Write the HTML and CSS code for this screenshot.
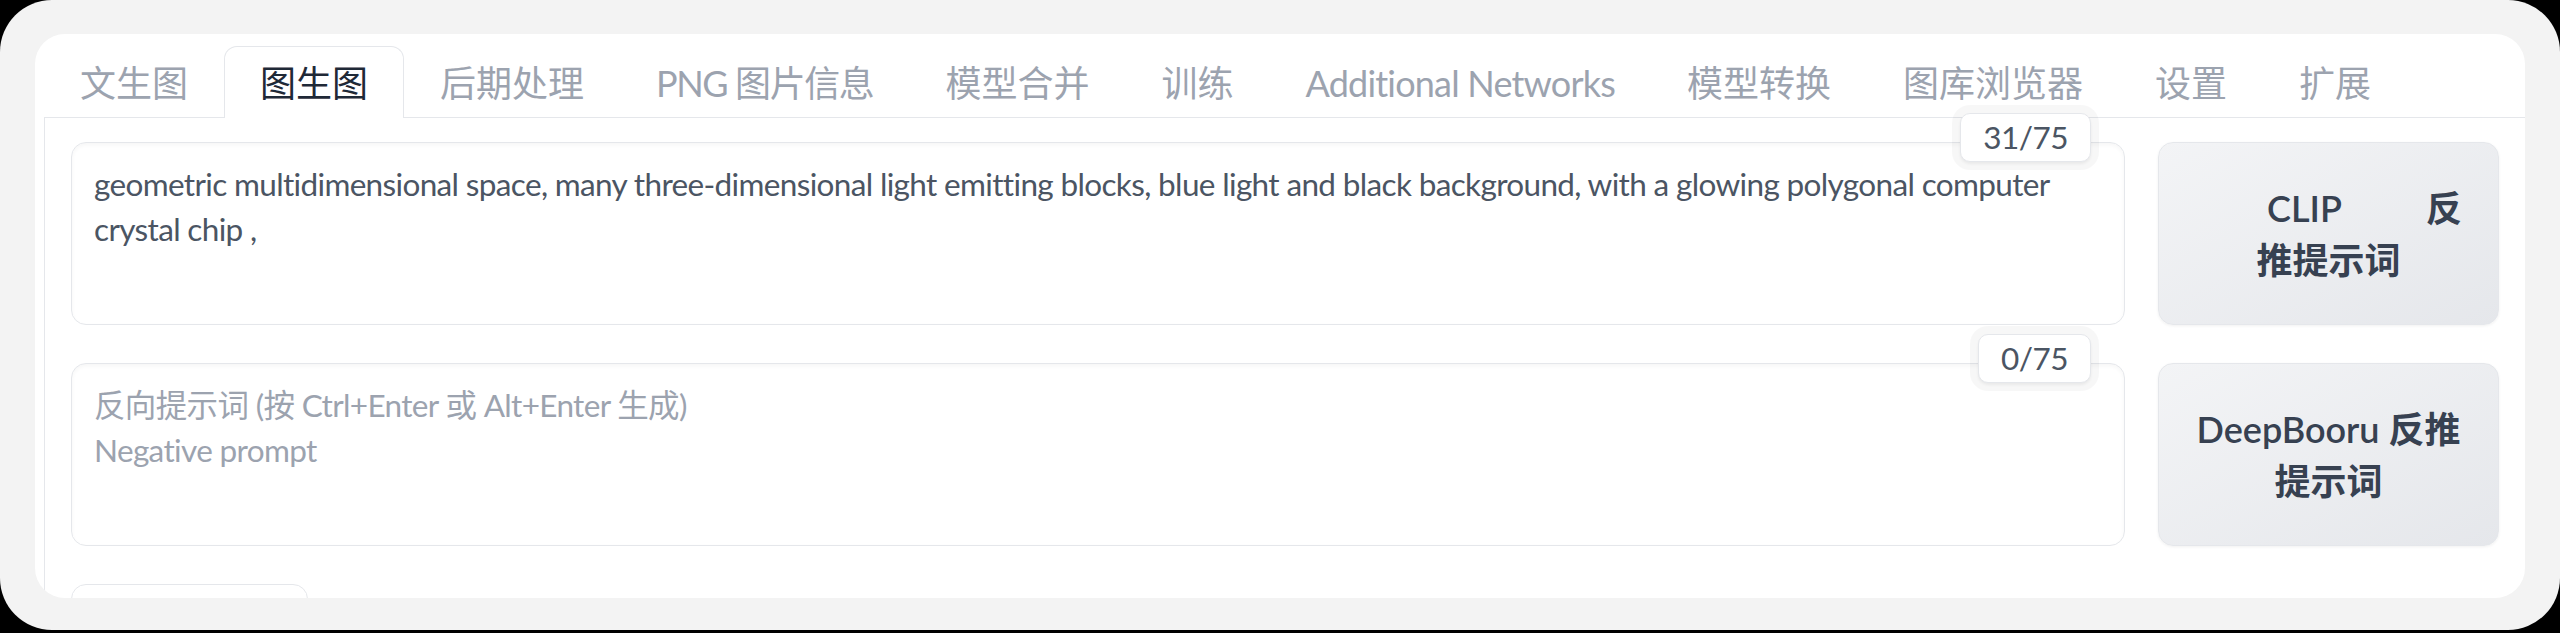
FILE: index.html
```html
<!DOCTYPE html>
<html lang="zh">
<head>
<meta charset="utf-8">
<title>img2img</title>
<link rel="stylesheet" href="styles.css">
</head>
<body>
<div class="frame">
  <div class="card">
    <div class="tabs">
      <div class="tab">文生图</div>
      <div class="tab active">图生图</div>
      <div class="tab">后期处理</div>
      <div class="tab png">PNG 图片信息</div>
      <div class="tab">模型合并</div>
      <div class="tab">训练</div>
      <div class="tab latin">Additional Networks</div>
      <div class="tab">模型转换</div>
      <div class="tab">图库浏览器</div>
      <div class="tab">设置</div>
      <div class="tab">扩展</div>
    </div>
    <div class="panel">
      <div class="grid">
        <div class="field">
          <div class="textbox">geometric multidimensional space, many three-dimensional light emitting blocks, blue light and black background, with a glowing polygonal computer crystal chip ,</div>
          <div class="counter">31/75</div>
        </div>
        <div class="btn"><span class="l1">CLIP<span class="gap"> </span>反</span><br>推提示词</div>
        <div class="field">
          <div class="textbox placeholder">反向提示词 (按 Ctrl+Enter 或 Alt+Enter 生成)<br>Negative prompt</div>
          <div class="counter">0/75</div>
        </div>
        <div class="btn">DeepBooru 反推<br>提示词</div>
      </div>
      <div class="next"></div>
    </div>
  </div>
</div>
</body>
</html>
```

FILE: styles.css
```css
* { box-sizing: border-box; }
html, body {
  margin: 0;
  padding: 0;
  background: #000;
  width: 2560px;
  height: 633px;
  overflow: hidden;
  font-family: Lato, "Noto Sans CJK SC", sans-serif;
}
.frame {
  width: 2560px;
  height: 630px;
  background: #f3f3f3;
  border-radius: 52px;
  padding: 34px 35px 0 35px;
}
.card {
  background: #fff;
  border-radius: 30px;
  height: 564px;
  overflow: hidden;
  padding: 12px 0 0 9px;
}
.tabs {
  display: flex;
  border-bottom: 1px solid #e5e7eb;
  height: 72px;
}
.tab {
  font-size: 36px;
  line-height: 53px;
  padding: 10px 35px 8px;
  color: #9ca3af;
  border: 1px solid transparent;
  border-bottom: none;
  border-radius: 13px 13px 0 0;
  white-space: nowrap;
  height: 72px;
}
.tab.latin {
  letter-spacing: -0.8px;
}
.tab.png {
  letter-spacing: -1.4px;
}
.tab.active {
  color: #1f2937;
  background: #fff;
  border-color: #e5e7eb;
  position: relative;
  z-index: 1;
}
.panel {
  border-left: 1px solid #e5e7eb;
  padding: 24px 26px 0 26px;
  height: 600px;
}
.grid {
  display: grid;
  grid-template-columns: 1fr 341px;
  grid-auto-rows: 183px;
  column-gap: 33px;
  row-gap: 38px;
}
.field {
  position: relative;
}
.textbox {
  height: 183px;
  border: 1px solid #e5e7eb;
  border-radius: 15px;
  box-shadow: inset 0 2px 4px rgba(0, 0, 0, 0.04);
  padding: 19px 22px;
  font-size: 31.5px;
  line-height: 45px;
  letter-spacing: -0.65px;
  color: #4b5563;
  background: #fff;
}
.textbox.placeholder {
  color: #9ca3af;
}
.counter {
  position: absolute;
  top: -29px;
  right: 34px;
  background: #fff;
  border: 1px solid #e5e7eb;
  border-radius: 10px;
  padding: 0 22px;
  font-size: 31.5px;
  line-height: 47px;
  letter-spacing: -0.5px;
  color: #4b5563;
  box-shadow: 0 0 0 8px rgba(0, 0, 0, 0.03), 0 2px 3px rgba(0, 0, 0, 0.06);
}
.btn {
  height: 183px;
  border: 1px solid #e5e7eb;
  border-radius: 15px;
  background: linear-gradient(to bottom right, #f3f4f6, #e5e7eb);
  box-shadow: 0 1px 3px rgba(0, 0, 0, 0.06);
  display: flex;
  flex-direction: column;
  justify-content: center;
  align-items: center;
  text-align: center;
  font-size: 36px;
  font-weight: 600;
  line-height: 52px;
  color: #374151;
  padding: 0 20px;
}
.btn br { display: none; }
.l1 {
  padding-left: 72px;
}
.gap {
  display: inline-block;
  width: 84px;
}
.next {
  margin-top: 38px;
  width: 237px;
  height: 60px;
  border: 1px solid #e5e7eb;
  border-radius: 15px;
  background: #fff;
}
```
